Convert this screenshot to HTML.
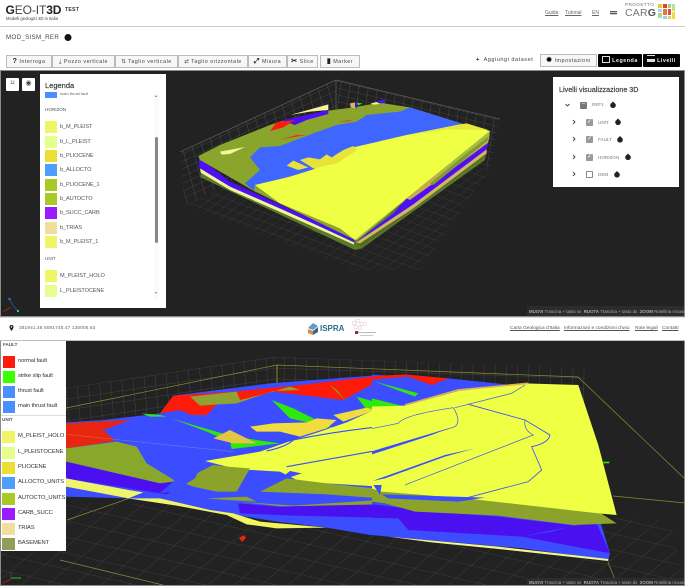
<!DOCTYPE html>
<html lang="it"><head><meta charset="utf-8"><title>GEO-IT3D</title>
<style>
html,body{margin:0;padding:0;background:#fff}
body{width:685px;height:586px;position:relative;overflow:hidden;font-family:"Liberation Sans",sans-serif;color:#333}
.a{position:absolute;white-space:nowrap}
.btn{position:absolute;top:55px;line-height:12px;background:#f7f7f7;border:1px solid #bbb;font-size:5.4px;letter-spacing:.5px;color:#444;text-align:center;white-space:nowrap;overflow:hidden;box-sizing:border-box;height:13px}
.btn b{font-size:7px;color:#222}
.blk{background:#000;color:#eee;border-color:#000;border-radius:1px}
.sw{position:absolute;width:12px;height:12px}
.lb{position:absolute;font-size:5.6px;letter-spacing:-.1px;color:#555;white-space:nowrap}
.lb2{position:absolute;font-size:5.8px;letter-spacing:-.12px;color:#333;white-space:nowrap}
.hd{position:absolute;font-size:4.6px;color:#555;white-space:nowrap}
svg{position:absolute;left:0;top:0}
.link{position:absolute;top:326px;font-size:4.8px;color:#555;text-decoration:underline;white-space:nowrap}
.hl{position:absolute;top:10px;font-size:5px;color:#666;text-decoration:underline}
.lv{position:absolute;font-size:4.6px;color:#777;white-space:nowrap}
.ck{position:absolute;width:6px;height:6px;background:#999;border-radius:1px;color:#fff;font-size:6px;line-height:6px;text-align:center}
</style></head><body>

<svg width="685" height="586" viewBox="0 0 685 586">
<defs>
<pattern id="pw" patternUnits="userSpaceOnUse" width="30" height="30" patternTransform="matrix(.3 -.138 .06 .22 0 0)"><path d="M0 0H30M0 0V30" stroke="#5e5e5e" stroke-width="2" fill="none"/></pattern>
<pattern id="pr" patternUnits="userSpaceOnUse" width="30" height="30" patternTransform="matrix(.3 .072 -.033 .22 156 10)"><path d="M0 0H30M0 0V30" stroke="#5e5e5e" stroke-width="2" fill="none"/></pattern>
<pattern id="pf" patternUnits="userSpaceOnUse" width="30" height="30" patternTransform="matrix(.27 .1 .27 -.2 5 135)"><path d="M0 0H30M0 0V30" stroke="#454545" stroke-width="2" fill="none"/></pattern>
<pattern id="bf" patternUnits="userSpaceOnUse" width="30" height="30" patternTransform="matrix(.7 .16 .5 -.42 0 490)"><path d="M0 0H30M0 0V30" stroke="#4a4a4a" stroke-width="1" fill="none"/></pattern>
<pattern id="bw" patternUnits="userSpaceOnUse" width="30" height="30" patternTransform="matrix(.37 -.055 .03 .36 66 388)"><path d="M0 0H30M0 0V30" stroke="#5d5d5d" stroke-width="1.4" fill="none"/></pattern>
<pattern id="bw2" patternUnits="userSpaceOnUse" width="30" height="30" patternTransform="matrix(.37 .012 -.005 .36 273 357)"><path d="M0 0H30M0 0V30" stroke="#5d5d5d" stroke-width="1.4" fill="none"/></pattern>
<clipPath id="v1"><rect x="1" y="71" width="683" height="245"/></clipPath>
<clipPath id="v2"><rect x="1" y="341" width="683" height="244"/></clipPath>
<clipPath id="cl"><rect x="60" y="335" width="312" height="251"/></clipPath>
<clipPath id="cr"><rect x="372" y="335" width="313" height="251"/></clipPath>
</defs>

<!-- top viewport -->
<rect x="0" y="70" width="685" height="247" fill="#8c8c8c"/>
<rect x="1" y="71" width="683" height="245" fill="#222"/>
<g clip-path="url(#v1)">
<polygon points="180,152 336,80 336,130 185,205" fill="url(#pw)"/>
<polygon points="336,80 500,119 490,170 336,130" fill="url(#pr)"/>
<polygon points="185,205 336,130 490,170 420,270 355,270" fill="url(#pf)"/>
<path d="M180 152L336 80L500 119M336 80V130" stroke="#6a6a6a" stroke-width=".6" fill="none"/>
<g transform="translate(180 70) scale(.3333)">
<polygon points="62,300 62,322 525,540 545,535 915,270 925,205 525,510" fill="#5a7a2a"/>
<polygon points="525,520 545,530 920,255 920,240" fill="#4f6d22"/>
<polygon points="60,292 150,348 310,418 522,518 522,524 310,430 150,360 62,308" fill="#f2f59a"/>
<polygon points="56,262 150,335 310,408 525,508 522,516 310,420 150,350 58,294" fill="#4d10f5"/>
<polygon points="525,510 930,183 927,210 700,372 530,512" fill="#a6bb45"/>
<polygon points="530,515 640,430 680,385 925,218 920,240 700,405 535,512" fill="#4d10f5"/>
<polygon points="528,518 700,403 920,238 920,250 700,415 540,520" fill="#d3b563"/>
<polygon points="680,385 750,330 850,260 925,205 925,218 760,340 690,390" fill="#c9a94a"/>
<polygon points="750,340 860,250 925,200 925,210 760,345" fill="#7d9c2c"/>
<polygon points="55,258 120,225 270,165 300,155 445,122 520,112 600,98 690,112 850,162 930,183 525,510 225,365 60,270" fill="#8aa52c"/>
<polygon points="195,340 240,300 210,262 240,232 300,228 400,190 470,165 530,155 560,135 660,125 690,112 850,162 680,195 520,235 400,298 330,322 225,345 222,362" fill="#3f66ff"/>
<polygon points="225,345 330,320 400,298 440,270 520,232 680,195 830,165 850,162 930,183 525,510 480,475 300,400" fill="#eeff44"/>
<polygon points="320,287 340,272 385,292 355,300" fill="#e8e23a"/>
<polygon points="360,270 385,262 420,268 440,253 455,262 490,240 520,228 532,240 470,280 400,295" fill="#e8e23a"/>
<polygon points="690,195 830,165 860,160 925,180 800,178" fill="#e6e83a"/>
<polygon points="120,245 195,231 150,252 125,254" fill="#f4f5a0"/>
<polygon points="330,135 445,103 445,120 390,125" fill="#f3f596"/>
<polygon points="305,152 445,120 445,132 380,150 345,165" fill="#4d10f5"/>
<polygon points="270,183 290,157 345,150 310,172" fill="#ff1a0a"/>
<polygon points="295,210 350,195 380,195 320,205" fill="#e03a20"/>
<polygon points="475,155 525,148 500,155" fill="#e03a20"/>
<polygon points="510,100 525,97 525,115 512,112" fill="#d9b463"/>
<polygon points="525,98 535,98 530,118" fill="#4d10f5"/>
<polygon points="530,98 548,100 535,106" fill="#3fdc20"/>
<polygon points="572,100 590,96 600,102 580,104" fill="#f3f596"/>
<polygon points="590,94 610,88 620,98 600,100" fill="#4d10f5"/>
</g>
<!-- gizmo -->
<path d="M10 300C12 305 15 308 18 311" stroke="#2b5ea8" stroke-width=".8" fill="none"/>
<path d="M11 307L3 312" stroke="#b02020" stroke-width="1"/>
<rect x="8.5" y="298" width="2" height="2" fill="#3a7ae0"/><rect x="17" y="310" width="2" height="2" fill="#40d040"/>
<rect x="527" y="306" width="157" height="10" fill="#2c2c2c"/>
</g>

<!-- bottom viewport -->
<rect x="0" y="340" width="685" height="246" fill="#8c8c8c"/>
<rect x="1" y="341" width="683" height="244" fill="#222"/>
<g clip-path="url(#v2)">
<polygon points="0,500 670,520 685,586 0,586" fill="url(#bf)"/>
<polygon points="60,389 273,357 273,440 60,500" fill="url(#bw)"/>
<polygon points="273,357 585,368 585,420 273,420" fill="url(#bw2)"/>
<path d="M66 408L277 365L578 377L684 478M613 496L685 503M67 520L130 498M60 560L163 585M608 562L617 585" stroke="#8d8d35" stroke-width=".7" fill="none"/>
<path d="M277 365V384" stroke="#a5a53a" stroke-width=".8"/>
<g clip-path="url(#cl)"><g transform="translate(60 335) scale(.3333)">
<polygon points="18,262 130,255 300,235 340,182 630,145 960,120 960,605 800,578 650,560 350,512 200,490 18,485" fill="#3b4dff"/>
<polygon points="205,490 300,490 450,525 520,535 600,560 800,578 650,580 560,568 500,540 350,512" fill="#f0f560"/>
<polygon points="18,265 110,260 210,255 130,285 165,318 18,340" fill="#e8260f"/>
<polygon points="300,235 340,182 520,170 720,150 960,122 960,135 850,195 720,180 640,170 530,200 470,208 440,240 395,240 360,225" fill="#ff1a0a"/>
<polygon points="18,340 170,320 230,335 260,385 350,440 300,445 18,380" fill="#89a72a"/>
<polygon points="18,380 300,445 400,432 320,478 18,430" fill="#4a10f0"/>
<polygon points="18,430 205,465 250,472 205,490 18,455" fill="#f0f468"/>
<polygon points="390,185 530,170 540,195 640,170 690,155 720,165 640,168 530,205 420,212" fill="#8fa233"/>
<polygon points="335,250 400,270 520,305 660,325 515,342 510,320 440,290" fill="#2fe80f"/>
<polygon points="635,195 700,220 790,265 820,280 780,270 690,250" fill="#2fe80f"/>
<polygon points="810,150 830,165 860,200 845,185" fill="#2fe80f"/>
<polygon points="890,185 960,205 960,222 920,225" fill="#2fe80f"/>
<polygon points="245,235 300,240 320,245 270,245" fill="#2fe80f"/>
<polygon points="460,310 510,285 590,325 520,325" fill="#e4c443"/>
<polygon points="570,275 640,265 740,262 770,250 830,255 800,280 720,305 660,290 590,290" fill="#f0dc3c"/>
<polygon points="435,378 600,350 680,322 780,290 860,262 960,217 960,455 800,445 720,440 660,410 570,405 500,395" fill="#eeff44"/>
<polygon points="820,240 920,218 945,225 850,260" fill="#f0dc3c"/>
<polygon points="360,440 460,390 500,395 570,400 530,470 470,470 400,455" fill="#8ba32a"/>
<polygon points="600,470 680,430 800,445 960,462 960,490 800,478" fill="#8ba32a"/>
<polygon points="440,490 560,485 590,500 500,495" fill="#8ba32a"/>
<polygon points="535,500 700,512 960,495 960,510 700,518" fill="#8ba32a"/>
<polygon points="535,505 650,515 960,508 960,548 700,542 540,535" fill="#4a10f0"/>
<polygon points="300,475 410,375 430,380 405,430 340,470" fill="#3b4dff"/>
<polygon points="560,430 575,405 620,408 640,420 590,450" fill="#3b4dff"/>
<polygon points="650,440 690,408 725,415 680,430" fill="#3b4dff"/>
<path d="M680 395Q820 370 960 345M700 315Q820 290 960 275M620 348Q680 335 700 315M940 440L960 430" stroke="#3b4dff" stroke-width="3.5" fill="none"/>
<path d="M18 298L520 350" stroke="#d8d87a" stroke-width="1" opacity=".6"/>
</g></g>
<g clip-path="url(#cr)"><g transform="translate(365 335) scale(.3333)">
<polygon points="0,118 250,130 440,150 280,170 120,215 0,225" fill="#3b4dff"/>
<polygon points="0,125 120,118 250,130 200,150 130,125 0,135" fill="#ff1a0a"/>
<polygon points="0,148 40,170 30,165 0,155" fill="#ff1a0a"/>
<polygon points="30,140 160,175 150,185" fill="#2fe80f"/>
<polygon points="0,185 120,215 40,222 0,215" fill="#2fe80f"/>
<polygon points="0,500 700,540 735,655 730,675 470,640 70,605 0,598" fill="#3b4dff"/>
<polygon points="70,605 400,635 730,672 730,678 400,642 200,622" fill="#f5f590"/>
<polygon points="0,505 200,530 400,545 630,572 690,555 735,655 470,605 130,585 100,550 0,548" fill="#4a10f0"/>
<polygon points="470,605 640,570 690,555 560,590" fill="#3b4dff"/>
<polygon points="0,460 300,490 700,530 755,565 625,570 400,542 150,530 60,505 0,498" fill="#8ba32a"/>
<polygon points="0,215 120,212 280,168 480,145 640,150 700,330 755,540 700,535 300,490 50,470 0,455" fill="#eeff44"/>
<path d="M120 210L280 165L490 145" stroke="#dfb453" stroke-width="5" fill="none"/>
<path d="M0 285L100 265Q115 240 265 218Q290 260 270 275L0 360M270 218L440 175L480 150" stroke="#3b4dff" stroke-width="2" fill="none"/>
<path d="M310 208L480 255L555 300Q550 325 500 335L530 405L490 440L300 490" stroke="#3b4dff" stroke-width="2.5" fill="none"/>
<path d="M480 255Q475 285 505 300L120 450" stroke="#3b4dff" stroke-width="2" fill="none"/>
<polygon points="0,355 250,280 200,300 0,365" fill="#3b4dff"/>
<polygon points="22,438 240,360 330,340 240,365 60,430" fill="#3b4dff"/>
<polygon points="50,478 110,480 360,488 280,500 70,490" fill="#3b4dff"/>
<polygon points="25,450 50,450 45,480" fill="#3b4dff"/>
<rect x="715" y="380" width="18" height="5" fill="#2fe80f"/>
</g></g>
<polygon points="239,538 244,535 246,538 242,542" fill="#e8260f"/>
<path d="M11 572V578" stroke="#2b5ea8" stroke-width=".7" fill="none"/>
<path d="M11 579L3 583" stroke="#b02020" stroke-width=".9"/><path d="M11 578H21" stroke="#30d030" stroke-width=".9"/>
<rect x="527" y="578" width="157" height="7" fill="#2c2c2c"/>
</g>

<!-- header lines -->
<rect x="0" y="26" width="685" height="1" fill="#ccc"/>
<rect x="0" y="316.5" width="685" height=".8" fill="#888"/>
<rect x="0" y="340" width="685" height=".8" fill="#ccc"/>
<!-- CARG tiles -->
<g>
<rect x="658" y="4" width="4" height="4" fill="#e8c93c"/><rect x="663" y="4" width="4" height="4" fill="#d9432f"/><rect x="668" y="4" width="3" height="4" fill="#a6d27a"/><rect x="672" y="4" width="3" height="7" fill="#bfe08f"/>
<rect x="658" y="9" width="4" height="3" fill="#a8d8e8"/><rect x="663" y="9" width="4" height="6" fill="#e8763a"/><rect x="668" y="9" width="3" height="6" fill="#dd5533"/>
<rect x="658" y="13" width="4" height="5" fill="#a8d8a0"/><rect x="663" y="16" width="4" height="3" fill="#9ad0e8"/><rect x="668" y="16" width="3" height="3" fill="#e8d24a"/><rect x="672" y="12" width="3" height="7" fill="#f0dc3c"/>
</g>
<rect x="610" y="11" width="7" height="1.3" fill="#555"/><rect x="610" y="13" width="7" height="1.3" fill="#555"/>
<!-- ISPRA logo -->
<polygon points="308,328 313,323 318,326 313,330" fill="#5f9ac8"/><polygon points="308,329 313,331 313,335 308,333" fill="#e8873a"/><polygon points="313,331 318,327 318,332 313,335" fill="#2e6b92"/>
<!-- second logo -->
<g fill="none" stroke="#dcc3c8" stroke-width=".5"><circle cx="354" cy="323" r="2"/><circle cx="358" cy="321" r="2"/><circle cx="362" cy="324" r="2"/><circle cx="356" cy="327" r="2"/><circle cx="360" cy="328" r="2"/><circle cx="365" cy="324" r="1.5"/></g>
<rect x="355" y="331" width="3" height="3" fill="#8a2a4a"/>
<rect x="358" y="332" width="18" height="1" fill="#bbb"/><rect x="360" y="335" width="13" height="1" fill="#ccc"/>
<!-- pin -->
<path d="M11.5 325a2 2 0 0 1 2 2c0 1.5-2 4-2 4s-2-2.5-2-4a2 2 0 0 1 2-2z" fill="#222"/><circle cx="11.5" cy="327" r=".7" fill="#fff"/>
<!-- info dot -->
<circle cx="68" cy="37.5" r="3.5" fill="#111"/>
</svg>

<!-- header -->
<div class="a" style="left:5.5px;top:3px;font-size:12px;line-height:15px;letter-spacing:-.1px;color:#222"><b>G</b><span style="color:#444">EO-IT</span><b>3D</b></div>
<div class="a" style="left:65px;top:7px;font-size:5.2px;font-weight:bold;color:#333;letter-spacing:.2px">TEST</div>
<div class="a" style="left:6px;top:16px;font-size:4.2px;color:#444">Modelli geologici 3D in Italia</div>
<span class="a hl" style="left:545px">Guida</span><span class="a hl" style="left:565px">Tutorial</span><span class="a hl" style="left:592px">EN</span>
<div class="a" style="left:625px;top:3px;font-size:4.8px;color:#777;letter-spacing:.3px">PROGETTO</div>
<div class="a" style="left:625px;top:7px;font-size:10.5px;letter-spacing:.2px;color:#777">CAR<b style="color:#555">G</b></div>
<div class="a" style="left:6px;top:34px;font-size:6.2px;letter-spacing:.3px;color:#444">MOD_SISM_RER</div>

<!-- toolbar -->
<div class="btn" style="left:6px;width:46px"><b>?</b> Interroga</div>
<div class="btn" style="left:52px;width:63px">⤓ Pozzo verticale</div>
<div class="btn" style="left:115px;width:63px">⇅ Taglio verticale</div>
<div class="btn" style="left:178px;width:70px">⇄ Taglio orizzontale</div>
<div class="btn" style="left:248px;width:39px"><b>⤢</b> Misura</div>
<div class="btn" style="left:287px;width:31px"><b>✂</b> Slice</div>
<div class="btn" style="left:320px;width:40px"><b>▮</b> Marker</div>
<div class="a" style="left:476px;top:57px;font-size:5.6px;letter-spacing:.5px;color:#444"><b style="color:#111">+</b>&nbsp; Aggiungi dataset</div>
<div class="btn" style="left:540px;width:57px;top:54px"><b style="color:#000">✹</b> Impostazioni</div>
<div class="btn blk" style="left:598px;width:44px;top:54px;font-weight:bold"><span style="display:inline-block;width:6px;height:5px;border:1px solid #ddd;vertical-align:-1px"></span> Legenda</div>
<div class="btn blk" style="left:643px;width:37px;top:54px;font-weight:bold"><span style="display:inline-block;width:8px;height:3px;border-top:1px solid #ddd;border-bottom:3px solid #ddd;vertical-align:0"></span> Livelli</div>

<!-- top small buttons -->
<div class="a" style="left:6px;top:78px;width:13px;height:12.5px;background:#fff;border-radius:1px;color:#444;font-size:7px;line-height:12px;text-align:center">⌑</div>
<div class="a" style="left:22px;top:78px;width:13px;height:12.5px;background:#fff;border-radius:1px;color:#444;font-size:7px;line-height:12px;text-align:center">◉</div>

<!-- legend top -->
<div class="a" style="left:40px;top:74px;width:126px;height:234px;background:#fff"></div>
<div class="a" style="left:45px;top:81px;font-size:7.5px;color:#333;-webkit-text-stroke:.15px #333">Legenda</div>
<div class="sw" style="left:45px;top:92px;height:6px;background:#4d8eff"></div>
<div class="a" style="left:60px;top:92px;font-size:4px;color:#666;height:3.5px;overflow:hidden;line-height:3px">main thrust fault</div>
<div class="hd" style="left:45px;top:107px">HORIZON</div>
<div class="sw" style="left:45px;top:121px;background:#f0f565"></div><div class="lb" style="left:60px;top:124px">b_M_PLEIST</div>
<div class="sw" style="left:45px;top:135.5px;background:#e6ff8c"></div><div class="lb" style="left:60px;top:138.5px">b_L_PLEIST</div>
<div class="sw" style="left:45px;top:150px;background:#eedd33"></div><div class="lb" style="left:60px;top:153px">b_PLIOCENE</div>
<div class="sw" style="left:45px;top:164px;background:#4d9eff"></div><div class="lb" style="left:60px;top:167px">b_ALLOCTO</div>
<div class="sw" style="left:45px;top:178.5px;background:#a9c926"></div><div class="lb" style="left:60px;top:181.5px">b_PLIOCENE_1</div>
<div class="sw" style="left:45px;top:193px;background:#a9c926"></div><div class="lb" style="left:60px;top:196px">b_AUTOCTO</div>
<div class="sw" style="left:45px;top:207px;background:#9b1bff"></div><div class="lb" style="left:60px;top:210px">b_SUCC_CARB</div>
<div class="sw" style="left:45px;top:221.5px;background:#f2de9c"></div><div class="lb" style="left:60px;top:224.5px">b_TRIAS</div>
<div class="sw" style="left:45px;top:236px;background:#f0f565"></div><div class="lb" style="left:60px;top:239px">b_M_PLEIST_1</div>
<div class="hd" style="left:45px;top:256px">UNIT</div>
<div class="sw" style="left:45px;top:270px;background:#f0f565"></div><div class="lb" style="left:60px;top:273px">M_PLEIST_HOLO</div>
<div class="sw" style="left:45px;top:285px;background:#e6ff8c"></div><div class="lb" style="left:60px;top:287.5px">L_PLEISTOCENE</div>
<div class="a" style="left:154px;top:92px;width:5px;height:208px;background:#fafafa"></div>
<div class="a" style="left:155px;top:137px;width:3px;height:106px;background:#888;border-radius:2px"></div>
<div class="a" style="left:155px;top:94px;border:1.5px solid transparent;border-bottom:2px solid #777"></div>
<div class="a" style="left:155px;top:292px;border:1.5px solid transparent;border-top:2px solid #777"></div>

<!-- levels -->
<div class="a" style="left:553px;top:77px;width:126px;height:110px;background:#fff"></div>
<div class="a" style="left:559px;top:85px;font-size:7.2px;color:#333;-webkit-text-stroke:.15px #333">Livelli visualizzazione 3D</div>
<svg width="685" height="586" viewBox="0 0 685 586" style="pointer-events:none">
<g fill="none" stroke="#444" stroke-width=".9">
<path d="M565.5 104l2 2 2-2M573 120l2 2-2 2M573 137l2 2-2 2M573 155l2 2-2 2M573 172l2 2-2 2"/>
</g>
<g fill="#222">
<path d="M613 101.5l2.5 2.5a2.800 2.800 0 1 1-5 0z"/><path d="M618 118.5l2.5 2.5a2.800 2.800 0 1 1-5 0z"/><path d="M620 136l2.5 2.5a2.800 2.800 0 1 1-5 0z"/><path d="M628 153.5l2.5 2.5a2.800 2.800 0 1 1-5 0z"/><path d="M617 171l2.5 2.5a2.800 2.800 0 1 1-5 0z"/>
</g>
</svg>
<div class="ck" style="left:580px;top:102px;width:7px;height:6.5px;background:#777;line-height:5.5px">–</div>
<div class="lv" style="left:592px;top:102px">REF1</div>
<div class="ck" style="left:586px;top:119px;width:7px;height:7px;line-height:7px">✓</div><div class="lv" style="left:598px;top:120px">UNIT</div>
<div class="ck" style="left:586px;top:136px;width:7px;height:7px;line-height:7px">✓</div><div class="lv" style="left:598px;top:137px">FAULT</div>
<div class="ck" style="left:586px;top:154px;width:7px;height:7px;line-height:7px">✓</div><div class="lv" style="left:598px;top:154.5px">HORIZON</div>
<div class="a" style="left:586px;top:171px;width:5px;height:5px;border:1px solid #888;border-radius:1px;background:#fff"></div><div class="lv" style="left:598px;top:172px">DEM</div>

<div class="a" style="left:529px;top:309px;font-size:4.4px;color:#aaa"><b>MUOVI</b> Trascina + tasto sx &nbsp;<b>RUOTA</b> Trascina + tasto dx &nbsp;<b>ZOOM</b> Rotellina mouse</div>

<!-- footer -->
<div class="a" style="left:19px;top:326px;font-size:4.8px;letter-spacing:.1px;color:#666">381941.48 5081748.47 136005.63</div>
<div class="a" style="left:320px;top:323.5px;font-size:8px;font-weight:bold;color:#2e6b92">ISPRA</div>
<div class="link" style="left:510px">Carta Geologica d'Italia</div>
<div class="link" style="left:564px">Informazioni e condizioni d'uso</div>
<div class="link" style="left:635px">Note legali</div>
<div class="link" style="left:662px">Contatti</div>

<!-- legend bottom -->
<div class="a" style="left:1px;top:341px;width:65px;height:210px;background:#fff"></div>
<div class="hd" style="left:3px;top:342px;font-weight:bold">FAULT</div>
<div class="sw" style="left:3px;top:356px;background:#ff1a0a"></div><div class="lb2" style="left:18px;top:358px">normal fault</div>
<div class="sw" style="left:3px;top:371px;background:#3cff00"></div><div class="lb2" style="left:18px;top:373px">strike slip fault</div>
<div class="sw" style="left:3px;top:386px;background:#4d8eff"></div><div class="lb2" style="left:18px;top:388px">thrust fault</div>
<div class="sw" style="left:3px;top:401px;background:#4d8eff"></div><div class="lb2" style="left:18px;top:403px">main thrust fault</div>
<div class="a" style="left:1px;top:415px;width:65px;height:.8px;background:#ddd"></div>
<div class="hd" style="left:2px;top:417px;font-weight:bold">UNIT</div>
<div class="sw" style="left:2px;top:431px;width:13px;background:#f0f565"></div><div class="lb2" style="left:18px;top:433px">M_PLEIST_HOLO</div>
<div class="sw" style="left:2px;top:446.5px;width:13px;background:#e6ff8c"></div><div class="lb2" style="left:18px;top:448.5px">L_PLEISTOCENE</div>
<div class="sw" style="left:2px;top:462px;width:13px;background:#eedd33"></div><div class="lb2" style="left:18px;top:464px">PLIOCENE</div>
<div class="sw" style="left:2px;top:477px;width:13px;background:#4d9eff"></div><div class="lb2" style="left:18px;top:479px">ALLOCTO_UNITS</div>
<div class="sw" style="left:2px;top:492.5px;width:13px;background:#a9c926"></div><div class="lb2" style="left:18px;top:494.5px">AUTOCTO_UNITS</div>
<div class="sw" style="left:2px;top:508px;width:13px;background:#9b1bff"></div><div class="lb2" style="left:18px;top:510px">CARB_SUCC</div>
<div class="sw" style="left:2px;top:523px;width:13px;background:#f2de9c"></div><div class="lb2" style="left:18px;top:525px">TRIAS</div>
<div class="sw" style="left:2px;top:538px;width:13px;background:#8f9e5a"></div><div class="lb2" style="left:18px;top:540px">BASEMENT</div>

<div class="a" style="left:529px;top:580px;font-size:4.4px;color:#aaa"><b>MUOVI</b> Trascina + tasto sx &nbsp;<b>RUOTA</b> Trascina + tasto dx &nbsp;<b>ZOOM</b> Rotellina mouse</div>
</body></html>
